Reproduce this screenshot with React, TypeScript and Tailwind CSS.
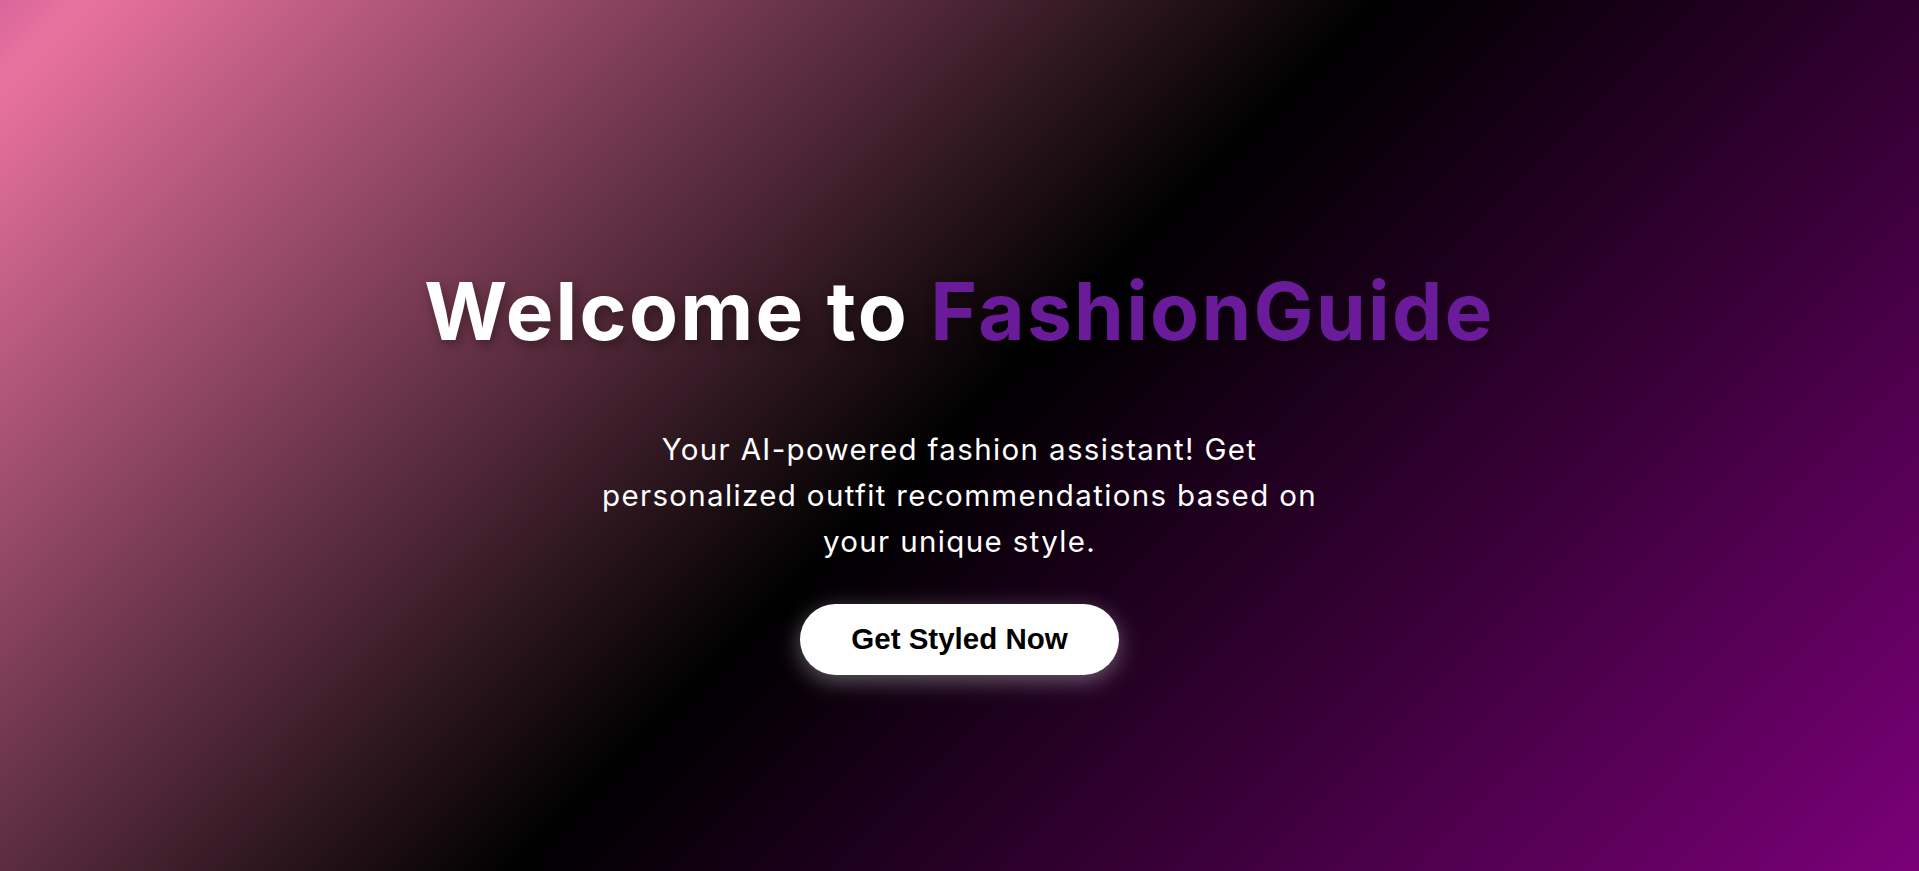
export default function App() {
  return (
    <main className="min-h-screen w-full bg-[linear-gradient(135deg,#d8669a_0%,#e9729f_3%,#000000_49.5%,#7b0079_100%)] font-['Inter','Open_Sans',sans-serif]">
      <section className="flex flex-col items-center px-6 pt-[263px] text-center">
        <h1 className="text-[80px] leading-[96px] font-bold tracking-[2.3px] text-white [text-shadow:3px_5px_12px_rgba(0,0,0,0.35)]">
          Welcome to <span className="text-[#6a1b9a]">FashionGuide</span>
        </h1>

        <p className="mt-[67px] max-w-[750px] text-[29.5px] leading-[46px] tracking-[1.35px] text-white">
          Your AI-powered fashion assistant! Get personalized outfit recommendations based on your unique style.
        </p>

        <button className="mt-[40px] h-[71px] rounded-full bg-white px-[51px] font-['Liberation_Sans',Arial,sans-serif] text-[29.5px] font-bold text-black shadow-[0_6px_22px_rgba(255,255,255,0.35)]">
          Get Styled Now
        </button>
      </section>
    </main>
  );
}
